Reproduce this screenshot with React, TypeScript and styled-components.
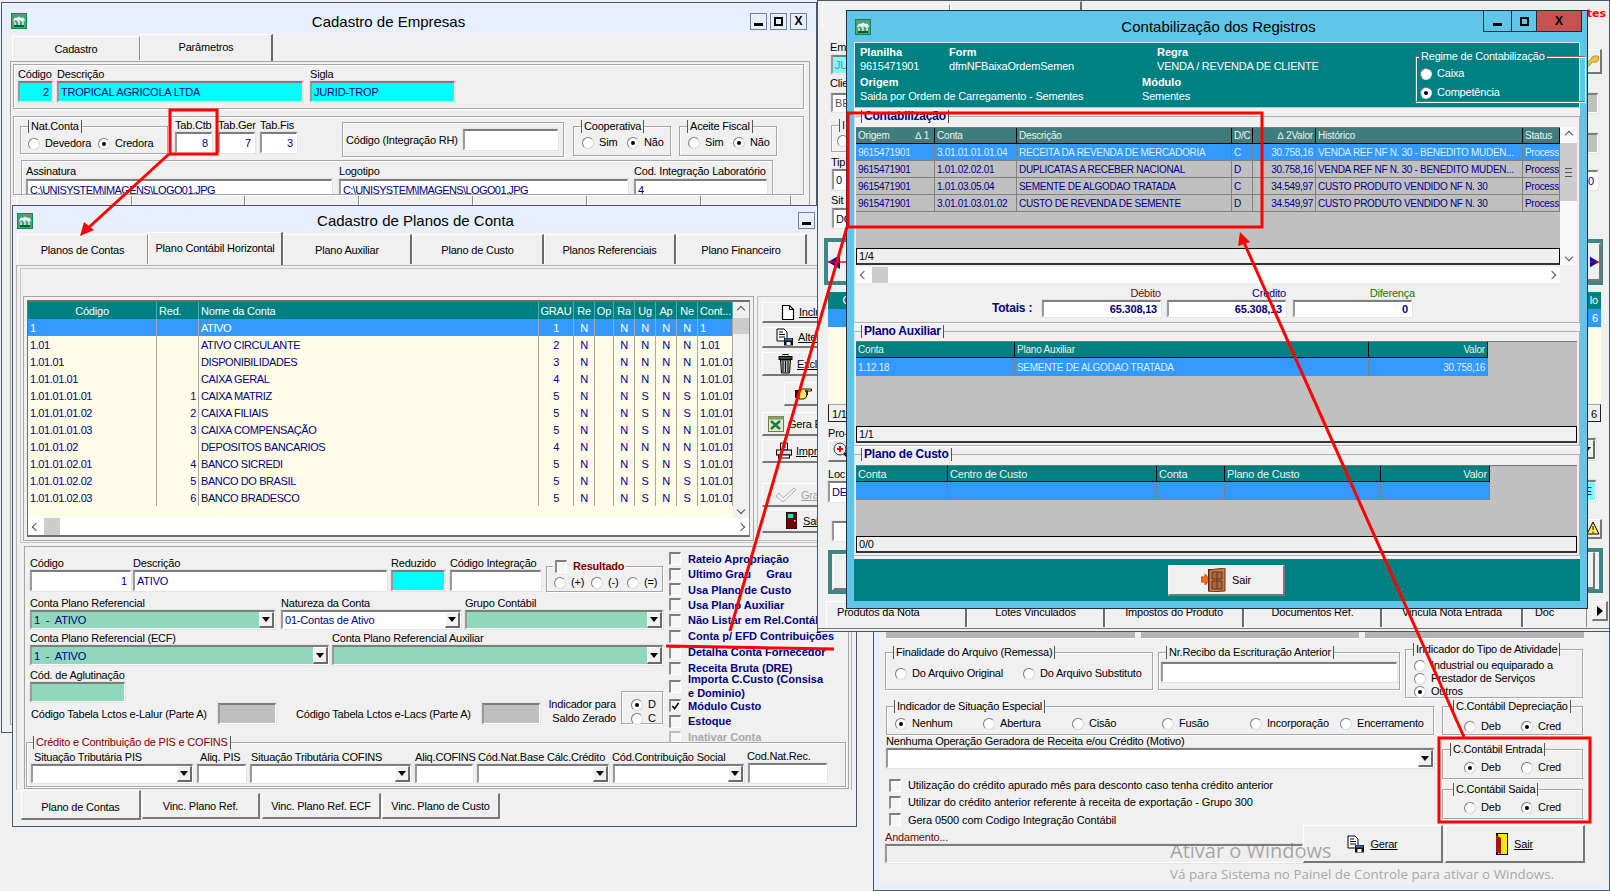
import React from "react";
import styled, { createGlobalStyle, css } from "styled-components";

const FONT = `"Liberation Sans", Arial, sans-serif`;

const Global = createGlobalStyle`
  html, body { margin: 0; padding: 0; background: #f0f0f0; }
  body { font: 11px ${FONT}; color: #000; overflow: hidden; letter-spacing: -0.2px; }
  #root { width: 1610px; height: 891px; }
`;

type Sp = { $mt?: number; $ml?: number };
const space = css<Sp>`
  margin-top: ${(p) => p.$mt ?? 0}px;
  margin-left: ${(p) => p.$ml ?? 0}px;
`;

const Desktop = styled.div`
  position: relative;
  width: 1610px;
  height: 891px;
  overflow: hidden;
  background: #f0f0f0;
`;

const Win = styled.div<{ $x: number; $y: number; $w: number; $h: number; $bg?: string; $edge?: string }>`
  position: absolute;
  left: ${(p) => p.$x}px;
  top: ${(p) => p.$y}px;
  width: ${(p) => p.$w}px;
  height: ${(p) => p.$h}px;
  box-sizing: border-box;
  border: 1px solid ${(p) => p.$edge ?? "#4d5866"};
  background: ${(p) => p.$bg ?? "#f0f0f0"};
  overflow: hidden;
`;

const TitleBar = styled.div<{ $h: number; $pl: number; $pr: number; $bg?: string; $pt?: number }>`
  display: flex;
  align-items: center;
  box-sizing: border-box;
  height: ${(p) => p.$h}px;
  padding: ${(p) => p.$pt ?? 3}px ${(p) => p.$pr}px 0 ${(p) => p.$pl}px;
  background: ${(p) => p.$bg ?? "#e6effb"};
`;

const Title = styled.div<{ $pl?: number; $size?: number }>`
  flex: 1;
  text-align: center;
  font-size: ${(p) => p.$size ?? 15}px;
  padding-left: ${(p) => p.$pl ?? 0}px;
  color: #000;
  white-space: nowrap;
  letter-spacing: 0;
`;

const WinBtns = styled.div`
  display: flex;
  gap: 3px;
`;

const WinBtn = styled.div`
  width: 17px;
  height: 17px;
  box-sizing: border-box;
  border: 1px solid #6f8296;
  background: #e6effb;
  display: flex;
  align-items: center;
  justify-content: center;
  font: bold 12px ${FONT};
`;

const MinGlyph = () => (
  <svg width="11" height="11" viewBox="0 0 11 11">
    <rect x="1" y="7" width="9" height="3" fill="#000" />
  </svg>
);
const MaxGlyph = () => (
  <svg width="11" height="11" viewBox="0 0 11 11">
    <rect x="2" y="2" width="7" height="7" fill="none" stroke="#000" strokeWidth="2" />
  </svg>
);

const TabRow = styled.div<{ $h: number; $pl: number; $gap?: number; $align?: string }>`
  display: flex;
  align-items: ${(p) => p.$align ?? "flex-end"};
  height: ${(p) => p.$h}px;
  padding-left: ${(p) => p.$pl}px;
  gap: ${(p) => p.$gap ?? 0}px;
  box-sizing: border-box;
  flex: none;
`;

const Tab = styled.div<{ $w: number; $h: number; $active?: boolean; $mb?: number; $pt?: number; $pb?: number }>`
  width: ${(p) => p.$w}px;
  height: ${(p) => p.$h}px;
  margin-bottom: ${(p) => p.$mb ?? 0}px;
  box-sizing: border-box;
  flex: none;
  padding-top: ${(p) => p.$pt ?? 0}px;
  padding-bottom: ${(p) => p.$pb ?? 0}px;
  display: flex;
  align-items: center;
  justify-content: center;
  background: #f0f0f0;
  border-top: 1px solid #fff;
  border-left: 1px solid #fff;
  border-right: ${(p) => (p.$active ? "2px solid #6b6b6b" : "1px solid #8c8c8c")};
  font-size: 11px;
  white-space: nowrap;
  overflow: hidden;
`;

const BottomTab = styled(Tab)<Sp & { $low?: boolean }>`
  ${space}
  border-bottom: 2px solid #7a7a7a;
  border-top: ${(p) => (p.$low ? "1px solid #f0f0f0" : "1px solid #fff")};
  border-right: 2px solid #7a7a7a;
  align-self: flex-start;
`;

const Etched = styled.div<Sp & { $w?: number; $h?: number; $pt?: number; $pl?: number; $noRight?: boolean; $line?: string }>`
  ${space}
  position: relative;
  box-sizing: border-box;
  flex: none;
  width: ${(p) => (p.$w ? `${p.$w}px` : "auto")};
  height: ${(p) => (p.$h ? `${p.$h}px` : "auto")};
  padding-top: ${(p) => p.$pt ?? 0}px;
  padding-left: ${(p) => p.$pl ?? 0}px;
  border: 1px solid ${(p) => p.$line ?? "#a6a6a6"};
  ${(p) => p.$noRight && "border-right: none;"}
  box-shadow: inset 1px 1px 0 #fff, 1px 1px 0 #fff;
`;

const Legend = styled.span<{ $color?: string; $bold?: boolean; $size?: number; $bg?: string; $plain?: boolean; $left?: number }>`
  position: absolute;
  top: -7px;
  left: ${(p) => p.$left ?? 7}px;
  display: flex;
  align-items: center;
  gap: 6px;
  line-height: 13px;
  padding: 0 2px;
  background: ${(p) => p.$bg ?? "#f0f0f0"};
  color: ${(p) => p.$color ?? "#000"};
  font-weight: ${(p) => (p.$bold ? 700 : 400)};
  font-size: ${(p) => p.$size ?? 11}px;
  white-space: nowrap;
  ${(p) =>
    !p.$plain &&
    css`
      border-left: 1px solid #555;
      border-right: 1px solid #555;
    `}
`;

const Label = styled.span<{ $ml?: number; $mt?: number; $color?: string }>`
  display: block;
  line-height: 13px;
  height: 13px;
  white-space: nowrap;
  margin-left: ${(p) => p.$ml ?? 0}px;
  margin-top: ${(p) => p.$mt ?? 0}px;
  color: ${(p) => p.$color ?? "#000"};
`;

const Field = styled.div<Sp & { $w: number }>`
  ${space}
  width: ${(p) => p.$w}px;
  flex: none;
`;

const Sunken = styled.div<Sp & { $w?: number; $h?: number; $bg?: string; $right?: boolean; $color?: string; $tight?: boolean }>`
  ${space}
  box-sizing: border-box;
  width: ${(p) => (p.$w ? `${p.$w}px` : "100%")};
  height: ${(p) => p.$h ?? 21}px;
  background: ${(p) => p.$bg ?? "#fff"};
  border-top: 2px solid #7d7d7d;
  border-left: 2px solid #9a9a9a;
  border-right: 1px solid #fff;
  border-bottom: 1px solid #fff;
  outline: 1px solid #e4e4e4;
  outline-offset: 0;
  color: ${(p) => p.$color ?? "#000080"};
  display: flex;
  align-items: center;
  justify-content: ${(p) => (p.$right ? "flex-end" : "space-between")};
  padding-left: 2px;
  padding-right: ${(p) => (p.$right ? 3 : 0)}px;
  white-space: nowrap;
  overflow: hidden;
  flex: none;
  ${(p) => p.$tight && "letter-spacing: -0.6px;"}
`;

const DropBtn = styled.span`
  width: 15px;
  height: 100%;
  flex: none;
  box-sizing: border-box;
  background: #f0f0f0;
  border-top: 1px solid #fff;
  border-left: 1px solid #fff;
  border-right: 2px solid #6a6a6a;
  border-bottom: 2px solid #6a6a6a;
  display: flex;
  align-items: center;
  justify-content: center;
  &::after {
    content: "";
    border-left: 4px solid transparent;
    border-right: 4px solid transparent;
    border-top: 5px solid #000;
  }
`;

const Row = styled.div<Sp & { $gap?: number; $h?: number; $center?: boolean }>`
  ${space}
  display: flex;
  align-items: ${(p) => (p.$center ? "center" : "flex-start")};
  gap: ${(p) => p.$gap ?? 0}px;
  ${(p) => p.$h && `height: ${p.$h}px;`}
  flex: none;
`;

const RadioDot = styled.span<{ $on?: boolean }>`
  width: 12px;
  height: 12px;
  flex: none;
  box-sizing: border-box;
  border-radius: 50%;
  background: #fff;
  border: 1px solid #7c7c7c;
  border-right-color: #d8d8d8;
  border-bottom-color: #d8d8d8;
  display: inline-flex;
  align-items: center;
  justify-content: center;
  &::after {
    content: "";
    width: 4px;
    height: 4px;
    border-radius: 50%;
    background: #000;
    display: ${(p) => (p.$on ? "block" : "none")};
  }
`;

const RadioOpt = styled.label<{ $w?: number; $color?: string; $gap?: number }>`
  display: flex;
  align-items: center;
  gap: ${(p) => p.$gap ?? 5}px;
  width: ${(p) => (p.$w ? `${p.$w}px` : "auto")};
  line-height: 13px;
  white-space: nowrap;
  flex: none;
  color: ${(p) => p.$color ?? "#000"};
`;

const RadioLine = styled.div<{ $l: number; $t: number; $col?: boolean; $gap?: number }>`
  display: flex;
  flex-direction: ${(p) => (p.$col ? "column" : "row")};
  gap: ${(p) => p.$gap ?? 0}px;
  padding: ${(p) => p.$t}px 0 0 ${(p) => p.$l}px;
`;

const Radio = ({ on, w, children, color, gap }: { on?: boolean; w?: number; children: React.ReactNode; color?: string; gap?: number }) => (
  <RadioOpt $w={w} $color={color} $gap={gap}>
    <RadioDot $on={on} />
    <span>{children}</span>
  </RadioOpt>
);

const CheckBox = styled.span<{ $dim?: boolean }>`
  width: 12px;
  height: 13px;
  flex: none;
  box-sizing: border-box;
  background: #f5f5f5;
  border-top: 2px solid ${(p) => (p.$dim ? "#bdbdbd" : "#7d7d7d")};
  border-left: 2px solid ${(p) => (p.$dim ? "#bdbdbd" : "#8d8d8d")};
  border-right: 1px solid #fff;
  border-bottom: 1px solid #fff;
  display: inline-flex;
  align-items: center;
  justify-content: center;
  overflow: hidden;
`;

const CheckRow = styled.div<{ $h: number; $dim?: boolean; $bold?: boolean; $color?: string }>`
  display: flex;
  align-items: center;
  gap: 7px;
  height: ${(p) => p.$h}px;
  color: ${(p) => (p.$dim ? "#a8a8a8" : p.$color ?? "#000080")};
  font-weight: ${(p) => (p.$bold ? 700 : 400)};
  line-height: 14px;
  white-space: nowrap;
  letter-spacing: ${(p) => (p.$bold ? 0 : -0.1)}px;
`;

const Tick = () => (
  <svg width="10" height="10" viewBox="0 0 10 10">
    <path d="M1.5 5 L4 8 L8.5 1.5" fill="none" stroke="#000" strokeWidth="1.8" />
  </svg>
);

/* ---------- buttons ---------- */
const RaisedBtn = styled.div<Sp & { $w: number; $h: number; $dim?: boolean; $gap?: number; $center?: boolean; $pl?: number; $bg?: string; $mr?: number }>`
  ${space}
  margin-right: ${(p) => p.$mr ?? 0}px;
  width: ${(p) => p.$w}px;
  height: ${(p) => p.$h}px;
  box-sizing: border-box;
  flex: none;
  display: flex;
  align-items: center;
  justify-content: ${(p) => (p.$center ? "center" : "flex-start")};
  gap: ${(p) => p.$gap ?? 4}px;
  padding-left: ${(p) => p.$pl ?? 0}px;
  background: ${(p) => p.$bg ?? "#f0f0f0"};
  border-top: 1px solid #fff;
  border-left: 1px solid #fff;
  border-right: 2px solid #777;
  border-bottom: 2px solid #777;
  color: ${(p) => (p.$dim ? "#a0a0a0" : "#000")};
  white-space: nowrap;
  font-size: 11px;
  overflow: hidden;
`;

const U = styled.span`
  text-decoration: underline;
`;

/* ---------- icons ---------- */
const AppIcon = () => (
  <svg width="16" height="16" viewBox="0 0 16 16" style={{ flex: "none" }}>
    <rect width="16" height="16" fill="#0a8a4c" />
    <rect x="1" y="1" width="14" height="14" fill="#4f9f76" />
    <path d="M2 9 Q3 3 6 5 Q8 2 10 5 Q13 3 14 8 L11 9 L9 7 L7 9 L5 7 Z" fill="#e8f5ee" />
    <path d="M4 9 V13 M8 8 V13 M12 9 V13" stroke="#fff" strokeWidth="1.2" />
    <rect x="3" y="12" width="10" height="2" fill="#0b5a30" />
  </svg>
);
const PageIcon = () => (
  <svg width="14" height="17" viewBox="0 0 14 17">
    <path d="M1.5 1.5 H8.5 L12.5 5.5 V15.5 H1.5 Z" fill="#fff" stroke="#000" strokeWidth="1.2" />
    <path d="M8.5 1.5 V5.5 H12.5" fill="none" stroke="#000" />
  </svg>
);
const EditIcon = ({ size = 18 }: { size?: number }) => (
  <svg width={size} height={size} viewBox="0 0 18 18">
    <path d="M1 1 H8 L11 4 V13 H1 Z" fill="#fff" stroke="#000" />
    <path d="M3 4 H7 M3 6.5 H9 M3 9 H9" stroke="#000" />
    <rect x="8" y="10" width="9" height="7.5" fill="#111" />
    <rect x="9" y="10.5" width="7" height="2" fill="#2f6fd0" />
    <rect x="10.5" y="14" width="4" height="3" fill="#fff" />
  </svg>
);
const TrashIcon = () => (
  <svg width="15" height="20" viewBox="0 0 15 20">
    <rect x="5" y="0.5" width="5" height="2" fill="none" stroke="#000" />
    <rect x="1" y="2.5" width="13" height="3" fill="#444" stroke="#000" />
    <path d="M2.5 6 H12.5 L11.5 19 H3.5 Z" fill="#bbb" stroke="#000" />
    <path d="M5 7 V18 M7.5 7 V18 M10 7 V18" stroke="#000" />
  </svg>
);
const HandIcon = () => (
  <svg width="17" height="12" viewBox="0 0 17 12">
    <rect x="0" y="2" width="4" height="8" fill="#111" />
    <path d="M4 2 L7 1 H16.5 V3 H10 H12.5 V5 H11 H12.5 V7 H11 H11.5 V9 L9 11 H4 Z" fill="#ffe85a" stroke="#000" strokeWidth="0.9" />
  </svg>
);
const ExcelIcon = () => (
  <svg width="16" height="16" viewBox="0 0 16 16">
    <rect x="0.5" y="0.5" width="15" height="15" fill="#dfe7d5" stroke="#6f7f40" />
    <rect x="0.5" y="0.5" width="15" height="3" fill="#8a9c66" />
    <path d="M3 5 L12 13 M12 5 L3 13" stroke="#1c7a3a" strokeWidth="2.4" />
  </svg>
);
const PrintIcon = () => (
  <svg width="16" height="17" viewBox="0 0 16 17">
    <path d="M4.5 1 H11.5 V8 H4.5 Z" fill="#fff" stroke="#000" />
    <path d="M6 3 H10 M6 5 H10" stroke="#000" />
    <rect x="0.5" y="8" width="15" height="5" fill="#ddd" stroke="#000" />
    <rect x="2.5" y="13" width="11" height="3" fill="#fff" stroke="#000" />
  </svg>
);
const CheckIcon = () => (
  <svg width="22" height="16" viewBox="0 0 22 16">
    <path d="M1 9 L4 6 L8 11 L19 1 L21 3 L8 15 Z" fill="#f6f6f6" stroke="#b0b0b0" />
  </svg>
);
const RedDoor = () => (
  <svg width="11" height="17" viewBox="0 0 11 17">
    <rect width="11" height="17" fill="#6e0808" stroke="#000" />
    <rect x="2" y="2" width="5" height="4" fill="#22e0e0" />
    <rect x="8" y="8" width="1.5" height="1.5" fill="#ff0" />
  </svg>
);
const WoodDoor = () => (
  <svg width="25" height="24" viewBox="0 0 25 24">
    <path d="M0 9 H4 V6 L9 12 L4 17 V14 H0 Z" fill="#ff6a1a" stroke="#d84000" />
    <rect x="7" y="1" width="6" height="22" fill="#3a1a08" />
    <path d="M8 2 L24 0 V23 L8 24 Z" fill="#c8784a" stroke="#6a3414" />
    <path d="M11 4 H21 V11 H11 Z M11 13 H21 V21 H11 Z M16 4 V21" fill="#a4683e" stroke="#6a3414" />
  </svg>
);
const YellowDoor = () => (
  <svg width="12" height="22" viewBox="0 0 12 22">
    <rect width="12" height="22" fill="#000" />
    <path d="M2 1 H11 V21 H2 Z" fill="#ffe800" />
    <path d="M0 2 L5 5 V21 L0 19 Z" fill="#a01818" />
  </svg>
);
const KeyIcon = () => (
  <svg width="20" height="16" viewBox="0 0 20 16">
    <path d="M1 12 L8 6 Q9 1 14 1 L18 2 Q20 6 16 9 Q12 10 10 9 L5 15 L1 15 Z" fill="#eec24a" stroke="#a67c00" />
  </svg>
);
const WarnIcon = () => (
  <svg width="13" height="15" viewBox="0 0 13 15">
    <path d="M6 1 L12 13 H0 Z" fill="#ffee44" stroke="#000" />
    <path d="M6 5 V9 M6 10.5 V12" stroke="#000" />
  </svg>
);
const LensIcon = () => (
  <svg width="18" height="18" viewBox="0 0 18 18">
    <path d="M10 10 L16 16" stroke="#000" strokeWidth="2.6" />
    <circle cx="7" cy="7" r="6" fill="#eee" stroke="#333" />
    <path d="M7 4 V10 M4 7 H10" stroke="#e01010" strokeWidth="2" />
  </svg>
);
const BlueArrow = () => (
  <svg width="26" height="14" viewBox="0 0 26 14">
    <path d="M0 7 L12 0 V14 Z" fill="#0000c8" />
    <path d="M0 7 H26" stroke="#e00000" strokeWidth="1.4" />
  </svg>
);
const BlueArrowRight = () => (
  <svg width="12" height="14" viewBox="0 0 12 14">
    <path d="M12 7 L0 0 V14 Z" fill="#0000c8" />
    <path d="M0 7 H12" stroke="#e00000" strokeWidth="1.4" />
  </svg>
);

/* ---------- Window 1 ---------- */
const Panel1 = styled.div`
  margin-left: 8px;
  width: 800px;
  height: 664px;
  box-sizing: border-box;
  border: 1px solid #a6a6a6;
  padding: 2px 0 0 2px;
`;
const ClipBox = styled(Etched)`
  overflow: hidden;
`;

/* ---------- Window 2 ---------- */
const PageFrame = styled.div`
  margin-left: 3px;
  width: 836px;
  height: 525px;
  box-sizing: border-box;
  border: 1px solid #b4b4b4;
  border-bottom: none;
  padding: 2px 0 0 3px;
`;
const TopBox = styled.div`
  width: 831px;
  height: 275px;
  box-sizing: border-box;
  border: 1px solid #c4c4c4;
  padding: 27px 0 0 2px;
  display: flex;
  gap: 3px;
`;
const GridGroup = styled.div`
  width: 731px;
  height: 245px;
  box-sizing: border-box;
  border: 1px solid #a6a6a6;
  padding: 3px;
  flex: none;
`;
const GridFrame = styled.div`
  box-sizing: border-box;
  width: 723px;
  height: 237px;
  border-top: 2px solid #6e6e6e;
  border-left: 1px solid #6e6e6e;
  border-right: 1px solid #8e8e8e;
  border-bottom: 2px solid #6e6e6e;
  display: flex;
  flex-direction: column;
  background: #fffde8;
`;
const GridBody = styled.div`
  display: flex;
  height: 216px;
  flex: none;
`;
const GridCol = styled.div`
  flex: none;
  width: 705px;
  overflow: hidden;
`;

const GridLine = styled.div<{ $cols: string; $bg?: string; $color?: string; $h?: number; $sep?: string; $size?: number; $ls?: number; $w?: number; $line?: string }>`
  display: grid;
  grid-template-columns: ${(p) => p.$cols};
  ${(p) => p.$w && `width: ${p.$w}px;`}
  height: ${(p) => p.$h ?? 17}px;
  background: ${(p) => p.$bg ?? "transparent"};
  color: ${(p) => p.$color ?? "#000080"};
  font-size: ${(p) => p.$size ?? 11}px;
  letter-spacing: ${(p) => p.$ls ?? -0.2}px;
  box-sizing: border-box;
  --sep: ${(p) => p.$sep ?? "#a8a8a8"};
  ${(p) => p.$line && `border-bottom: 1px solid ${p.$line};`}
`;
const Cell = styled.div<{ $align?: string; $pad?: number }>`
  display: flex;
  align-items: center;
  justify-content: ${(p) => p.$align ?? "flex-start"};
  padding: 0 ${(p) => p.$pad ?? 2}px;
  border-right: 1px solid var(--sep);
  box-sizing: border-box;
  overflow: hidden;
  white-space: nowrap;
  min-width: 0;
`;

const ScrollV = styled.div<{ $w?: number; $h?: number; $bg?: string }>`
  width: ${(p) => p.$w ?? 16}px;
  ${(p) => p.$h && `height: ${p.$h}px;`}
  flex: none;
  background: ${(p) => p.$bg ?? "#f0f0f0"};
  display: flex;
  flex-direction: column;
  justify-content: space-between;
  align-items: center;
`;
const ThumbV = styled.div<{ $h: number }>`
  width: 100%;
  height: ${(p) => p.$h}px;
  background: #cdcdcd;
  display: flex;
  align-items: center;
  justify-content: center;
  font-size: 8px;
  flex: none;
  box-sizing: border-box;
`;
const Grip = styled.span`
  width: 7px;
  height: 7px;
  border-top: 1px solid #555;
  border-bottom: 1px solid #555;
  position: relative;
  &::after {
    content: "";
    position: absolute;
    left: 0;
    right: 0;
    top: 3px;
    height: 1px;
    background: #555;
  }
`;
const Chevron = styled.span<{ $dir: "up" | "down" | "left" | "right" }>`
  width: 16px;
  height: 16px;
  flex: none;
  display: flex;
  align-items: center;
  justify-content: center;
  &::after {
    content: "";
    width: 5px;
    height: 5px;
    border-top: 1px solid #505050;
    border-left: 1px solid #505050;
    transform: rotate(
      ${(p) => ({ up: 45, right: 135, down: 225, left: 315 }[p.$dir])}deg
    );
  }
`;
const ScrollH = styled.div<Sp & { $w?: number; $h?: number }>`
  ${space}
  ${(p) => p.$w && `width: ${p.$w}px;`}
  height: ${(p) => p.$h ?? 17}px;
  box-sizing: border-box;
  background: #fff;
  display: flex;
  align-items: center;
  flex: none;
`;
const ThumbH = styled.div<{ $w: number }>`
  width: ${(p) => p.$w}px;
  height: 100%;
  background: #cdcdcd;
  flex: none;
`;
const Spacer = styled.div`
  flex: 1;
`;

const BtnCol = styled.div`
  flex: 1;
  height: 245px;
  box-sizing: border-box;
  border: 1px solid #c0c0c0;
  padding-left: 4px;
  overflow: hidden;
`;

const FormPanel = styled.div`
  margin: 3px 0 0 4px;
  width: 825px;
  height: 243px;
  box-sizing: border-box;
  border: 1px solid #a6a6a6;
`;
const FormTop = styled.div`
  display: flex;
  gap: 6px;
  height: 195px;
  padding-left: 5px;
`;
const LeftCol = styled.div`
  width: 633px;
  flex: none;
  padding-top: 10px;
`;
const CheckCol = styled.div`
  padding-top: 4px;
  flex: none;
`;
const LowerBlock = styled(Row)`
  margin-top: 4px;
  align-items: flex-end;
`;
const LowerLeft = styled.div`
  width: 591px;
  flex: none;
`;
const GrayBox = styled(Sunken)<{ $mr?: number }>`
  background: #c0c0c0;
  margin-right: ${(p) => p.$mr ?? 0}px;
`;
const Plain = styled.span<{ $w?: number; $ml?: number }>`
  display: block;
  white-space: nowrap;
  ${(p) => p.$w && `width: ${p.$w}px;`}
  margin-left: ${(p) => p.$ml ?? 0}px;
  flex: none;
`;
const IndLines = styled.div`
  width: 76px;
  flex: none;
  text-align: right;
  line-height: 14px;
  margin-top: -6px;
  white-space: nowrap;
`;

/* ---------- Window 4 strips ---------- */
const Middle = styled.div`
  display: flex;
  justify-content: space-between;
  height: 573px;
  flex: none;
`;
const StripCol = styled.div<{ $right?: boolean }>`
  width: 60px;
  position: relative;
  flex: none;
  display: flex;
  flex-direction: column;
  align-items: ${(p) => (p.$right ? "flex-end" : "flex-start")};
`;
const StripText = styled.span<Sp & { $bold?: boolean; $mr?: number }>`
  ${space}
  line-height: 13px;
  height: 13px;
  display: block;
  flex: none;
`;
const StripInput = styled(Sunken)<{ $mr?: number }>`
  margin-right: ${(p) => p.$mr ?? 0}px;
`;
const TealFrame = styled.div<Sp & { $w: number; $h: number; $mr?: number; $inner?: string }>`
  ${space}
  margin-right: ${(p) => p.$mr ?? 0}px;
  width: ${(p) => p.$w}px;
  height: ${(p) => p.$h}px;
  box-sizing: border-box;
  flex: none;
  border: 4px solid #3f8585;
  background: ${(p) => p.$inner ?? "#f0f0f0"};
  display: flex;
  align-items: center;
`;
const MiniGrid = styled.div<Sp & { $mr?: number; $right?: boolean }>`
  ${space}
  margin-right: ${(p) => p.$mr ?? 0}px;
  width: 50px;
  flex: none;
  display: flex;
  flex-direction: column;
  text-align: ${(p) => (p.$right ? "right" : "left")};
`;
const MiniBand = styled.div<{ $bg: string; $h: number; $color?: string }>`
  height: ${(p) => p.$h}px;
  box-sizing: border-box;
  background: ${(p) => p.$bg};
  color: ${(p) => p.$color ?? "#fff"};
  line-height: ${(p) => p.$h}px;
  padding: 0 3px;
  font-size: 11px;
`;
const MiniBar = styled(MiniBand)<{ $right?: boolean }>`
  border: 1px solid #222;
  border-top: 1px solid #aaa;
  background: #f0f0f0;
  color: #000;
  margin-top: 1px;
`;
const RedTes = styled.div`
  position: absolute;
  right: 3px;
  top: -22px;
  color: #ff0000;
  font: bold 11px "DejaVu Sans", sans-serif;
  letter-spacing: 0;
  line-height: 16px;
`;
const ArrowBtn = styled(RaisedBtn)`
  &::after {
    content: "";
    border-top: 5px solid transparent;
    border-bottom: 5px solid transparent;
    border-left: 6px solid #000;
    margin: 0 auto;
  }
`;
const Win4Bottom = styled.div`
  height: 4px;
  border-top: 1px solid #777;
  border-bottom: 1px solid #aaa;
`;

/* ---------- Window 3 ---------- */
const Win3Btns = styled.div`
  display: flex;
  align-self: flex-start;
`;
const Win3Btn = styled.div<{ $w: number; $bg?: string }>`
  width: ${(p) => p.$w}px;
  height: 21px;
  box-sizing: border-box;
  border: 1px solid #1e2a33;
  border-top: none;
  margin-left: -1px;
  background: ${(p) => p.$bg ?? "#5fc6ea"};
  display: flex;
  align-items: center;
  justify-content: center;
  font: bold 12px ${FONT};
`;
const Win3Body = styled.div`
  margin-left: 7px;
  width: 726px;
  height: 559px;
  background: #f0f0f0;
  display: flex;
  flex-direction: column;
`;
const TealHeader = styled.div`
  height: 66px;
  flex: none;
  background: #008080;
  color: #fff;
  display: flex;
  border: 1px solid #d8eaea;
  box-sizing: border-box;
  border-bottom-color: #9fcfcf;
`;
const HeadLeft = styled.div`
  width: 555px;
  flex: none;
  padding: 2px 0 0 5px;
  display: flex;
  flex-direction: column;
  gap: 2px;
`;
const HeadRow = styled.div`
  display: flex;
`;
const HeadCell = styled.div<{ $w: number }>`
  width: ${(p) => p.$w}px;
  flex: none;
  line-height: 14px;
  white-space: nowrap;
`;
const B = styled.div`
  font-weight: 700;
  letter-spacing: 0;
`;
const Section = styled.div<Sp & { $h: number }>`
  ${space}
  position: relative;
  flex: none;
  height: ${(p) => p.$h}px;
  box-sizing: border-box;
  border: 1px solid #b0b0b0;
  border-left-color: #d8d8d8;
  padding-left: 1px;
  box-shadow: 0 1px 0 #fff;
`;
const DataArea = styled.div<{ $h: number; $w: number }>`
  height: ${(p) => p.$h}px;
  width: ${(p) => p.$w}px;
  background: #c0c0c0;
  border-top: 1px solid #777;
  box-sizing: border-box;
  overflow: hidden;
`;
const GridHead = styled(GridLine)`
  border-bottom: 1px solid #000;
  color: #e8f4f4;
  --sep: #000;
`;
const StatusBar = styled.div<{ $w: number }>`
  width: ${(p) => p.$w}px;
  height: 17px;
  box-sizing: border-box;
  border: 1px solid #000;
  border-bottom: 2px solid #333;
  background: #f0f0f0;
  line-height: 15px;
  padding-left: 2px;
  flex: none;
`;
const Totals = styled.div`
  display: flex;
  align-items: flex-end;
  margin-top: 3px;
  padding-left: 136px;
`;
const TotalLabel = styled.div`
  width: 50px;
  flex: none;
  font: 700 12px ${FONT};
  color: #000080;
  line-height: 18px;
`;
const TotalField = styled.div<{ $w: number; $ml: number }>`
  width: ${(p) => p.$w}px;
  margin-left: ${(p) => p.$ml}px;
  flex: none;
  text-align: right;
`;
const TotalTitle = styled.div<{ $color: string; $mr?: number }>`
  color: ${(p) => p.$color};
  line-height: 14px;
  margin-right: ${(p) => p.$mr ?? 0}px;
  white-space: nowrap;
`;
const TotalVal = styled(Sunken)`
  font-weight: 700;
`;
const FootBar = styled.div`
  margin-top: 3px;
  flex: none;
  height: 42px;
  background: #008080;
  display: flex;
  align-items: center;
  justify-content: center;
  padding-left: 19px;
`;
const Regime = styled(Etched)`
  margin-left: auto;
`;

/* ---------- Window 5 ---------- */
const Win5Inner = styled.div`
  margin-left: 6px;
  width: 725px;
  height: 252px;
  background: #f0f0f0;
  padding-left: 5px;
  box-sizing: border-box;
`;
const TopBars = styled.div`
  display: flex;
  gap: 6px;
  padding-left: 1px;
`;
const TopBar = styled.div<{ $w: number }>`
  width: ${(p) => p.$w}px;
  height: 6px;
  background: #b4b4b4;
  border-bottom: 1px solid #fff;
  flex: none;
`;
const Col = styled.div<Sp & { $w: number }>`
  ${space}
  width: ${(p) => p.$w}px;
  flex: none;
`;

/* ---------- overlays ---------- */
const Annot = styled.svg`
  position: absolute;
  left: 0;
  top: 0;
  pointer-events: none;
`;
const Watermark = styled.div`
  position: absolute;
  left: 1170px;
  top: 839px;
  color: rgba(115, 115, 115, 0.6);
  font-family: "Open Sans", sans-serif;
  pointer-events: none;
  white-space: nowrap;
  letter-spacing: 0;
`;
const WmA = styled.div`
  font-size: 20px;
  line-height: 24px;
`;
const WmB = styled.div`
  font-size: 13.4px;
  line-height: 20px;
  margin-top: 1px;
`;

/* ---------- data ---------- */
const planCols = "129px 42px 340px 35px 21px 19px 21px 21px 21px 21px 35px";
const planHead = ["Código", "Red.", "Nome da Conta", "GRAU", "Re", "Op", "Ra", "Ug", "Ap", "Ne", "Cont..."];
const planRows = [
  ["1", "", "ATIVO", "1", "N", "", "N", "N", "N", "N", "1"],
  ["1.01", "", "ATIVO CIRCULANTE", "2", "N", "", "N", "N", "N", "N", "1.01"],
  ["1.01.01", "", "DISPONIBILIDADES", "3", "N", "", "N", "N", "N", "N", "1.01.01"],
  ["1.01.01.01", "", "CAIXA GERAL", "4", "N", "", "N", "N", "N", "N", "1.01.01"],
  ["1.01.01.01.01", "1", "CAIXA MATRIZ", "5", "N", "", "N", "S", "N", "S", "1.01.01"],
  ["1.01.01.01.02", "2", "CAIXA FILIAIS", "5", "N", "", "N", "S", "N", "S", "1.01.01"],
  ["1.01.01.01.03", "3", "CAIXA COMPENSAÇÃO", "5", "N", "", "N", "S", "N", "N", "1.01.01"],
  ["1.01.01.02", "", "DEPOSITOS BANCARIOS", "4", "N", "", "N", "N", "N", "N", "1.01.01"],
  ["1.01.01.02.01", "4", "BANCO SICREDI", "5", "N", "", "N", "S", "N", "S", "1.01.01"],
  ["1.01.01.02.02", "5", "BANCO DO BRASIL", "5", "N", "", "N", "S", "N", "S", "1.01.01"],
  ["1.01.01.02.03", "6", "BANCO BRADESCO", "5", "N", "", "N", "S", "N", "S", "1.01.01"],
];
const planAlign = (i: number) => (i === 1 ? "flex-end" : i >= 3 && i <= 9 ? "center" : "flex-start");

const contCols = "79px 82px 215px 21px 63px 207px 37px";
const contHead = ["Origem\u00a0\u00a0\u00a0\u00a0\u00a0\u00a0\u00a0\u00a0\u00a0\u00a0∆ 1", "Conta", "Descrição", "D/C", "∆ 2Valor", "Histórico", "Status"];
const contRows = [
  ["9615471901", "3.01.01.01.01.04", "RECEITA DA REVENDA DE MERCADORIA", "C", "30.758,16", "VENDA REF NF N. 30 - BENEDITO MUDEN...", "Processado"],
  ["9615471901", "1.01.02.02.01", "DUPLICATAS A RECEBER NACIONAL", "D", "30.758,16", "VENDA REF NF N. 30 - BENEDITO MUDEN...", "Processado"],
  ["9615471901", "1.01.03.05.04", "SEMENTE DE ALGODAO TRATADA", "C", "34.549,97", "CUSTO PRODUTO VENDIDO NF N. 30", "Processado"],
  ["9615471901", "3.01.01.03.01.02", "CUSTO DE REVENDA DE SEMENTE", "D", "34.549,97", "CUSTO PRODUTO VENDIDO NF N. 30", "Processado"],
];
const checkItems: { t: React.ReactNode; h: number; on?: boolean; dim?: boolean }[] = [
  { t: "Rateio Apropriação", h: 15 },
  { t: "Ultimo Grau\u00a0\u00a0\u00a0\u00a0\u00a0Grau", h: 16 },
  { t: "Usa Plano de Custo", h: 15 },
  { t: "Usa Plano Auxiliar", h: 15 },
  { t: "Não Listar em Rel.Contábil", h: 16 },
  { t: "Conta p/ EFD Contribuições", h: 16 },
  { t: "Detalha Conta Fornecedor", h: 16 },
  { t: "Receita Bruta (DRE)", h: 16 },
  { t: <span>Importa C.Custo (Consisa<br />e Dominio)</span>, h: 20 },
  { t: "Módulo Custo", h: 19, on: true },
  { t: "Estoque", h: 12 },
  { t: "Inativar Conta", h: 20, dim: true },
];

export default function App() {
  return (
    <Desktop>
      <Global />

      {/* Cadastro de Empresas */}
      <Win $x={1} $y={2} $w={816} $h={731}>
        <TitleBar $h={30} $pl={9} $pr={9} $pt={6}>
          <AppIcon />
          <Title>Cadastro de Empresas</Title>
          <WinBtns>
            <WinBtn><MinGlyph /></WinBtn>
            <WinBtn><MaxGlyph /></WinBtn>
            <WinBtn>X</WinBtn>
          </WinBtns>
        </TitleBar>
        <TabRow $h={28} $pl={10}>
          <Tab $w={128} $h={24} $mb={1}>Cadastro</Tab>
          <Tab $w={133} $h={27} $active $pb={3}>Parâmetros</Tab>
        </TabRow>
        <Panel1>
          <Etched $w={791} $h={45} $pt={3} $pl={4}>
            <Row $gap={4}>
              <Field $w={35}>
                <Label>Código</Label>
                <Sunken $bg="#00ffff" $right>2</Sunken>
              </Field>
              <Field $w={246}>
                <Label>Descrição</Label>
                <Sunken $bg="#00ffff">TROPICAL AGRICOLA LTDA</Sunken>
              </Field>
              <Field $w={145} $ml={3}>
                <Label>Sigla</Label>
                <Sunken $bg="#00ffff">JURID-TROP</Sunken>
              </Field>
            </Row>
          </Etched>
          <ClipBox $w={791} $h={79} $mt={7} $pt={2} $pl={6}>
            <Row $h={41}>
              <Etched $w={148} $h={28} $mt={7}>
                <Legend>Nat.Conta</Legend>
                <RadioLine $l={7} $t={10}>
                  <Radio w={70}>Devedora</Radio>
                  <Radio on>Credora</Radio>
                </RadioLine>
              </Etched>
              <Field $w={37} $ml={7}>
                <Label>Tab.Ctb</Label>
                <Sunken $right>8</Sunken>
              </Field>
              <Field $w={37} $ml={6}>
                <Label>Tab.Ger</Label>
                <Sunken $right>7</Sunken>
              </Field>
              <Field $w={37} $ml={5}>
                <Label>Tab.Fis</Label>
                <Sunken $right>3</Sunken>
              </Field>
              <Etched $w={222} $h={35} $mt={3} $ml={45}>
                <Row $center $h={33} $gap={5} $ml={3}>
                  <Plain>Código (Integração RH)</Plain>
                  <Sunken $w={95}> </Sunken>
                </Row>
              </Etched>
              <Etched $w={98} $h={30} $mt={7} $ml={9}>
                <Legend>Cooperativa</Legend>
                <RadioLine $l={8} $t={9}>
                  <Radio w={45}>Sim</Radio>
                  <Radio on>Não</Radio>
                </RadioLine>
              </Etched>
              <Etched $w={98} $h={30} $mt={7} $ml={8}>
                <Legend>Aceite Fiscal</Legend>
                <RadioLine $l={8} $t={9}>
                  <Radio w={45}>Sim</Radio>
                  <Radio on>Não</Radio>
                </RadioLine>
              </Etched>
            </Row>
            <Etched $w={752} $h={50} $ml={1} $pt={4} $pl={4}>
              <Row $gap={7}>
                <Field $w={306}>
                  <Label>Assinatura</Label>
                  <Sunken $h={21} $mt={1} $tight>C:\UNISYSTEM\IMAGENS\LOGO01.JPG</Sunken>
                </Field>
                <Field $w={289}>
                  <Label>Logotipo</Label>
                  <Sunken $h={21} $mt={1} $tight>C:\UNISYSTEM\IMAGENS\LOGO01.JPG</Sunken>
                </Field>
                <Field $w={133} $ml={-1}>
                  <Label>Cod. Integração Laboratório</Label>
                  <Sunken $h={21} $mt={1}>4</Sunken>
                </Field>
              </Row>
            </Etched>
          </ClipBox>
          <TabRow $h={10} $pl={3} $align="flex-start">
            {[116, 113, 114, 114, 114, 114, 90].map((w, i) => (
              <Tab key={i} $w={w} $h={30} />
            ))}
          </TabRow>
        </Panel1>
      </Win>

      {/* Cadastro de Planos de Conta */}
      <Win $x={12} $y={205} $w={845} $h={622}>
        <TitleBar $h={26} $pl={4} $pr={41}>
          <AppIcon />
          <Title>Cadastro de Planos de Conta</Title>
          <WinBtn><MinGlyph /></WinBtn>
        </TitleBar>
        <TabRow $h={33} $pl={4}>
          <Tab $w={131} $h={30} $mb={1}>Planos de Contas</Tab>
          <Tab $w={135} $h={33} $active $pb={3}>Plano Contábil Horizontal</Tab>
          <Tab $w={129} $h={30} $mb={1} $active>Plano Auxiliar</Tab>
          <Tab $w={132} $h={30} $mb={1} $active>Plano de Custo</Tab>
          <Tab $w={132} $h={30} $mb={1} $active>Planos Referenciais</Tab>
          <Tab $w={131} $h={30} $mb={1} $active>Plano Financeiro</Tab>
        </TabRow>
        <PageFrame>
          <TopBox>
            <GridGroup>
              <GridFrame>
                <GridBody>
                  <GridCol>
                    <GridLine $cols={planCols} $bg="#008080" $color="#fff" $sep="#4db0b0">
                      {planHead.map((h, i) => (
                        <Cell key={h} $align={i === 0 || (i >= 3 && i < 10) ? "center" : "flex-start"}>{h}</Cell>
                      ))}
                    </GridLine>
                    {planRows.map((r, ri) => (
                      <GridLine
                        key={ri}
                        $cols={planCols}
                        $bg={ri === 0 ? "#3399ff" : "transparent"}
                        $color={ri === 0 ? "#fff" : "#000080"}
                        $ls={-0.4}
                      >
                        {r.map((c, i) => (
                          <Cell key={i} $align={planAlign(i)}>{c}</Cell>
                        ))}
                      </GridLine>
                    ))}
                  </GridCol>
                  <ScrollV>
                    <Chevron $dir="up" />
                    <ThumbV $h={16} />
                    <Spacer />
                    <Chevron $dir="down" />
                  </ScrollV>
                </GridBody>
                <ScrollH>
                  <Chevron $dir="left" />
                  <ThumbH $w={16} />
                  <Spacer />
                  <Chevron $dir="right" />
                </ScrollH>
              </GridFrame>
            </GridGroup>
            <BtnCol>
              <RaisedBtn $w={90} $h={21} $mt={5} $pl={18}><PageIcon /><U>Incluir</U></RaisedBtn>
              <RaisedBtn $w={90} $h={21} $mt={4} $pl={13}><EditIcon /><U>Alterar</U></RaisedBtn>
              <RaisedBtn $w={90} $h={24} $mt={4} $pl={15}><TrashIcon /><U>Excluir</U></RaisedBtn>
              <RaisedBtn $w={70} $h={24} $mt={6} $ml={22} $pl={10}><HandIcon /></RaisedBtn>
              <RaisedBtn $w={90} $h={24} $mt={6} $pl={5}><ExcelIcon /><span>Gera Excel</span></RaisedBtn>
              <RaisedBtn $w={90} $h={24} $mt={3} $pl={13}><PrintIcon /><U>Imprimir</U></RaisedBtn>
              <RaisedBtn $w={90} $h={24} $mt={20} $pl={12} $dim><CheckIcon /><U>Gravar</U></RaisedBtn>
              <RaisedBtn $w={90} $h={24} $mt={2} $pl={23} $gap={6}><RedDoor /><U>Sair</U></RaisedBtn>
            </BtnCol>
          </TopBox>
          <FormPanel>
            <FormTop>
              <LeftCol>
                <Row $h={35}>
                  <Field $w={101}>
                    <Label>Código</Label>
                    <Sunken $right>1</Sunken>
                  </Field>
                  <Field $w={254} $ml={2}>
                    <Label>Descrição</Label>
                    <Sunken>ATIVO</Sunken>
                  </Field>
                  <Field $w={54} $ml={4}>
                    <Label>Reduzido</Label>
                    <Sunken $bg="#00ffff"> </Sunken>
                  </Field>
                  <Field $w={91} $ml={5}>
                    <Label>Código Integração</Label>
                    <Sunken> </Sunken>
                  </Field>
                  <Etched $w={117} $h={26} $mt={9} $ml={5}>
                    <Legend $plain $color="#800000" $bold $left={6}>
                      <CheckBox />
                      Resultado
                    </Legend>
                    <RadioLine $l={7} $t={9}>
                      <Radio w={37} gap={5}>(+)</Radio>
                      <Radio w={36} gap={5}>(-)</Radio>
                      <Radio gap={5}>(=)</Radio>
                    </RadioLine>
                  </Etched>
                </Row>
                <Row $mt={5} $gap={6}>
                  <Field $w={245}>
                    <Label>Conta Plano Referencial</Label>
                    <Sunken $h={19} $bg="#8fd8bc">1&nbsp;&nbsp;-&nbsp;&nbsp;ATIVO<DropBtn /></Sunken>
                  </Field>
                  <Field $w={180}>
                    <Label>Natureza da Conta</Label>
                    <Sunken $h={19}>01-Contas de Ativo<DropBtn /></Sunken>
                  </Field>
                  <Field $w={198} $ml={-2}>
                    <Label>Grupo Contábil</Label>
                    <Sunken $h={19} $bg="#8fd8bc"><span /><DropBtn /></Sunken>
                  </Field>
                </Row>
                <Row $mt={3} $gap={3}>
                  <Field $w={299}>
                    <Label>Conta Plano Referencial (ECF)</Label>
                    <Sunken $h={20} $bg="#8fd8bc">1&nbsp;&nbsp;-&nbsp;&nbsp;ATIVO<DropBtn /></Sunken>
                  </Field>
                  <Field $w={331}>
                    <Label>Conta Plano Referencial Auxiliar</Label>
                    <Sunken $h={20} $bg="#8fd8bc"><span /><DropBtn /></Sunken>
                  </Field>
                </Row>
                <LowerBlock>
                  <LowerLeft>
                    <Field $w={95}>
                      <Label>Cód. de Aglutinação</Label>
                      <Sunken $h={20} $bg="#8fd8bc"> </Sunken>
                    </Field>
                    <Row $center $h={21} $mt={1}>
                      <Plain $w={187} $ml={1}>Código Tabela Lctos e-Lalur (Parte A)</Plain>
                      <GrayBox $w={58}> </GrayBox>
                      <Plain $w={186} $ml={20}>Código Tabela Lctos e-Lacs (Parte A)</Plain>
                      <GrayBox $w={58}> </GrayBox>
                      <IndLines>Indicador para<br />Saldo Zerado</IndLines>
                    </Row>
                  </LowerLeft>
                  <Etched $w={42} $h={33}>
                    <RadioLine $l={9} $t={6} $col $gap={1}>
                      <Radio on gap={5}>D</Radio>
                      <Radio gap={5}>C</Radio>
                    </RadioLine>
                  </Etched>
                </LowerBlock>
              </LeftCol>
              <CheckCol>
                {checkItems.map((c, i) => (
                  <CheckRow key={i} $h={c.h} $dim={c.dim} $bold>
                    <CheckBox $dim={c.dim}>{c.on && <Tick />}</CheckBox>
                    <span>{c.t}</span>
                  </CheckRow>
                ))}
              </CheckCol>
            </FormTop>
            <Etched $w={820} $h={45} $ml={1} $pt={8} $pl={4}>
              <Legend $color="#800000" $left={6}>Crédito e Contribuição de PIS e COFINS</Legend>
              <Row $gap={4}>
                <Field $w={162}><Label $ml={3}>Situação Tributária PIS</Label><Sunken $h={19}><span /><DropBtn /></Sunken></Field>
                <Field $w={49}><Label $ml={3}>Aliq. PIS</Label><Sunken $h={19}> </Sunken></Field>
                <Field $w={161}><Label $ml={1}>Situação Tributária COFINS</Label><Sunken $h={19}><span /><DropBtn /></Sunken></Field>
                <Field $w={58}><Label>Aliq.COFINS</Label><Sunken $h={19}> </Sunken></Field>
                <Field $w={132}><Label $ml={1}>Cód.Nat.Base Cálc.Crédito</Label><Sunken $h={19}><span /><DropBtn /></Sunken></Field>
                <Field $w={131}><Label $ml={-1}>Cód.Contribuição Social</Label><Sunken $h={19}><span /><DropBtn /></Sunken></Field>
                <Field $w={79} $mt={-1}><Label $ml={-1}>Cod.Nat.Rec.</Label><Sunken $h={20}> </Sunken></Field>
              </Row>
            </Etched>
          </FormPanel>
        </PageFrame>
        <TabRow $h={31} $pl={8} $align="flex-start">
          <BottomTab $w={120} $h={30} $pt={4}>Plano de Contas</BottomTab>
          <BottomTab $w={118} $h={26} $low $mt={3} $ml={1}>Vinc. Plano Ref.</BottomTab>
          <BottomTab $w={119} $h={26} $low $mt={3} $ml={2}>Vinc. Plano Ref. ECF</BottomTab>
          <BottomTab $w={118} $h={26} $low $mt={3} $ml={1}>Vinc. Plano de Custo</BottomTab>
        </TabRow>
      </Win>

      {/* Window behind the Contabilização dialog */}
      <Win $x={817} $y={0} $w={793} $h={632}>
        <TabRow $h={27} $pl={4} $align="flex-end">
          <Tab $w={128} $h={24} />
          <Tab $w={132} $h={27} $active>Movimentação</Tab>
        </TabRow>
        <Middle>
          <StripCol>
            <StripText $mt={13} $ml={12}>Em</StripText>
            <StripInput $w={50} $h={19} $mt={1} $ml={13} $bg="#7ffbfb" $color="#6a8a9a">JU</StripInput>
            <StripText $mt={3} $ml={12}>Clie</StripText>
            <StripInput $w={50} $h={19} $mt={3} $ml={13} $color="#555">BE</StripInput>
            <Etched $w={40} $h={27} $mt={13} $ml={13}>
              <Legend $color="#000080">I</Legend>
              <RadioLine $l={5} $t={9}><Radio>{""}</Radio></RadioLine>
            </Etched>
            <StripText $mt={4} $ml={13}>Tip</StripText>
            <StripInput $w={50} $ml={14}>0</StripInput>
            <StripText $mt={4} $ml={13}>Sit</StripText>
            <StripInput $w={50} $h={20} $mt={1} $ml={14}>DO</StripInput>
            <TealFrame $w={60} $h={47} $mt={10} $ml={6}>
              <BlueArrow />
            </TealFrame>
            <MiniGrid $mt={7} $ml={10}>
              <MiniBand $bg="#008080" $h={17}>&nbsp;&nbsp;&nbsp;&nbsp;C</MiniBand>
              <MiniBand $bg="#3399ff" $h={18} />
              <MiniBand $bg="#fffde8" $h={76} />
              <MiniBar $bg="#f0f0f0" $h={18}>1/1</MiniBar>
            </MiniGrid>
            <StripText $mt={5} $ml={10}>Pro-</StripText>
            <RaisedBtn $w={50} $h={22} $ml={10} $pl={4}><LensIcon /></RaisedBtn>
            <StripText $mt={6} $ml={10}>Loc</StripText>
            <StripInput $w={50} $h={21} $ml={10}>DE</StripInput>
            <StripInput $w={50} $h={20} $mt={19} $ml={14}> </StripInput>
            <TealFrame $w={50} $h={44} $mt={9} $ml={10}>
              <RaisedBtn $w={40} $h={36} $ml={1} />
            </TealFrame>
          </StripCol>
          <StripCol $right>
            <RedTes>tes</RedTes>
            <RaisedBtn $w={40} $h={25} $mt={21} $pl={22} $mr={7}><KeyIcon /></RaisedBtn>
            <GrayBox $w={40} $h={20} $mt={19} $mr={11}> </GrayBox>
            <GrayBox $w={40} $h={20} $mt={20} $mr={11}> </GrayBox>
            <StripInput $w={40} $h={20} $mt={17} $mr={11} $right>0</StripInput>
            <TealFrame $w={40} $h={46} $mt={49} $mr={6}>
              <RaisedBtn $w={34} $h={38} $center $pl={22}><BlueArrowRight /></RaisedBtn>
            </TealFrame>
            <MiniGrid $mt={7} $mr={8} $right>
              <MiniBand $bg="#008080" $h={17}>lo</MiniBand>
              <MiniBand $bg="#3399ff" $h={18}>6</MiniBand>
              <MiniBand $bg="#fffde8" $h={76} />
              <MiniBar $bg="#f0f0f0" $h={18}>6</MiniBar>
            </MiniGrid>
            <StripInput $w={40} $h={22} $mt={16} $mr={13}><span /><DropBtn /></StripInput>
            <StripInput $w={40} $h={21} $mt={20} $mr={13} $bg="#7ffbfb" $right>E</StripInput>
            <RaisedBtn $w={40} $h={20} $mt={18} $pl={24} $mr={7}><WarnIcon /></RaisedBtn>
            <TealFrame $w={40} $h={45} $mt={9} $mr={6}>
              <RaisedBtn $w={28} $h={37} />
            </TealFrame>
          </StripCol>
        </Middle>
        <TabRow $h={27} $pl={8} $align="flex-start">
          <Tab $w={141} $h={26} $active $pb={6}>
            <Plain $w={118}>Produtos da Nota</Plain>
          </Tab>
          <Tab $w={138} $h={26} $active $pb={6}>Lotes Vinculados</Tab>
          <Tab $w={139} $h={26} $active $pb={6}>Impostos do Produto</Tab>
          <Tab $w={138} $h={26} $active $pb={6}>Documentos Ref.</Tab>
          <Tab $w={141} $h={26} $active $pb={6}>Vincula Nota Entrada</Tab>
          <Tab $w={64} $h={26} $pb={6}><Plain $w={40}>Doc</Plain></Tab>
          <ArrowBtn $w={16} $h={20} $ml={5} />
        </TabRow>
        <Win4Bottom />
      </Win>

      {/* Lower right form */}
      <Win $x={873} $y={631} $w={737} $h={260} $bg="#e6effb">
        <Win5Inner>
          <TopBars>
            <TopBar $w={249} />
            <TopBar $w={218} />
            <TopBar $w={219} />
          </TopBars>
          <Row $mt={10} $h={49} $gap={5}>
            <Etched $w={268} $h={38} $mt={3}>
              <Legend>Finalidade do Arquivo (Remessa)</Legend>
              <RadioLine $l={9} $t={14}>
                <Radio w={128}>Do Arquivo Original</Radio>
                <Radio>Do Arquivo Substituto</Radio>
              </RadioLine>
            </Etched>
            <Etched $w={242} $h={38} $mt={3} $pt={9} $pl={2}>
              <Legend>Nr.Recibo da Escrituração Anterior</Legend>
              <Sunken $w={236} $h={20}> </Sunken>
            </Etched>
            <Etched $w={178} $h={49}>
              <Legend>Indicador do Tipo de Atividade</Legend>
              <RadioLine $l={8} $t={9} $col $gap={0}>
                <Radio>Industrial ou equiparado a</Radio>
                <Radio>Prestador de Serviços</Radio>
                <Radio on>Outros</Radio>
              </RadioLine>
            </Etched>
          </Row>
          <Row $mt={8} $h={119}>
            <Col $w={548} $ml={1}>
              <Etched $w={548} $h={29}>
                <Legend>Indicador de Situação Especial</Legend>
                <RadioLine $l={8} $t={10}>
                  <Radio on w={88}>Nenhum</Radio>
                  <Radio w={89}>Abertura</Radio>
                  <Radio w={90}>Cisão</Radio>
                  <Radio w={88}>Fusão</Radio>
                  <Radio w={90}>Incorporação</Radio>
                  <Radio>Encerramento</Radio>
                </RadioLine>
              </Etched>
              <Label>Nenhuma Operação Geradora de Receita e/ou Crédito (Motivo)</Label>
              <Sunken $h={20} $w={548}><span /><DropBtn /></Sunken>
              <Col $w={400} $mt={9} $ml={3}>
                <CheckRow $h={16} $color="#000"><CheckBox /><span>Utilização do crédito apurado mês para desconto caso tenha crédito anterior</span></CheckRow>
                <CheckRow $h={18} $color="#000"><CheckBox /><span>Utilizar do crédito anterior referente à receita de exportação - Grupo 300</span></CheckRow>
                <CheckRow $h={17} $color="#000"><CheckBox /><span>Gera 0500 com Codigo Integração Contábil</span></CheckRow>
              </Col>
            </Col>
            <Col $w={141} $ml={8}>
              <Etched $w={141} $h={29}>
                <Legend $left={10}>C.Contábil Depreciação</Legend>
                <RadioLine $l={21} $t={13}>
                  <Radio w={57}>Deb</Radio>
                  <Radio on>Cred</Radio>
                </RadioLine>
              </Etched>
              <Etched $w={141} $h={30} $mt={14}>
                <Legend $left={7}>C.Contábil Entrada</Legend>
                <RadioLine $l={21} $t={11}>
                  <Radio on w={57}>Deb</Radio>
                  <Radio>Cred</Radio>
                </RadioLine>
              </Etched>
              <Etched $w={141} $h={30} $mt={10}>
                <Legend $left={10}>C.Contábil Saida</Legend>
                <RadioLine $l={21} $t={11}>
                  <Radio w={57}>Deb</Radio>
                  <Radio on>Cred</Radio>
                </RadioLine>
              </Etched>
            </Col>
          </Row>
          <Row>
            <Col $w={418}>
              <Label $color="#800000" $mt={6}>Andamento...</Label>
              <Sunken $h={19} $bg="#efefef"> </Sunken>
            </Col>
            <RaisedBtn $w={140} $h={38} $center $gap={5}><EditIcon /><U>Gerar</U></RaisedBtn>
            <RaisedBtn $w={140} $h={38} $center $gap={6} $ml={2}><YellowDoor /><U>Sair</U></RaisedBtn>
          </Row>
        </Win5Inner>
      </Win>

      {/* Contabilização dos Registros */}
      <Win $x={846} $y={10} $w={742} $h={599} $bg="#5fc6ea" $edge="#20303c">
        <TitleBar $h={31} $pl={8} $pr={5} $bg="#5fc6ea" $pt={0}>
          <AppIcon />
          <Title $pl={82} $size={15}>Contabilização dos Registros</Title>
          <Win3Btns>
            <Win3Btn $w={29}><MinGlyph /></Win3Btn>
            <Win3Btn $w={26}><MaxGlyph /></Win3Btn>
            <Win3Btn $w={46} $bg="#c75050">X</Win3Btn>
          </Win3Btns>
        </TitleBar>
        <Win3Body>
          <TealHeader>
            <HeadLeft>
              <HeadRow>
                <HeadCell $w={89}><B>Planilha</B>9615471901</HeadCell>
                <HeadCell $w={208}><B>Form</B>dfmNFBaixaOrdemSemen</HeadCell>
                <HeadCell $w={200}><B>Regra</B>VENDA / REVENDA DE CLIENTE</HeadCell>
              </HeadRow>
              <HeadRow>
                <HeadCell $w={282}><B>Origem</B>Saida por Ordem de Carregamento - Sementes</HeadCell>
                <HeadCell $w={100}><B>Módulo</B>Sementes</HeadCell>
              </HeadRow>
            </HeadLeft>
            <Regime $w={170} $h={46} $mt={13} $noRight $line="#a85a5a">
              <Legend $plain $bg="#008080" $color="#fff" $left={3}>Regime de Contabilização</Legend>
              <RadioLine $l={4} $t={10} $col $gap={6}>
                <Radio color="#fff">Caixa</Radio>
                <Radio color="#fff" on>Competência</Radio>
              </RadioLine>
            </Regime>
          </TealHeader>
          <Section $h={207} $mt={8}>
            <Legend $color="#000080" $bold $size={12} $left={6}>Contabilização</Legend>
            <Row $mt={10}>
              <Col $w={704}>
                <DataArea $h={121} $w={704}>
                  <GridHead $cols={contCols} $bg="#417c7c" $h={16} $size={10} $ls={-0.2}>
                    {contHead.map((h, i) => (
                      <Cell key={h} $align={i === 4 ? "flex-end" : "flex-start"}>{h}</Cell>
                    ))}
                  </GridHead>
                  {contRows.map((r, ri) => (
                    <GridLine
                      key={ri}
                      $cols={contCols}
                      $bg={ri === 0 ? "#3399ff" : "transparent"}
                      $color={ri === 0 ? "#dbeeff" : "#000080"}
                      $sep="#808080"
                      $size={10}
                      $ls={-0.3}
                      $line="#808080"
                    >
                      {r.map((c, i) => (
                        <Cell key={i} $align={i === 4 ? "flex-end" : "flex-start"}>{c}</Cell>
                      ))}
                    </GridLine>
                  ))}
                </DataArea>
                <StatusBar $w={704}>1/4</StatusBar>
              </Col>
              <ScrollV $w={17} $h={138} $bg="#f8f8f8">
                <Chevron $dir="up" />
                <ThumbV $h={58}><Grip /></ThumbV>
                <Spacer />
                <Chevron $dir="down" />
              </ScrollV>
            </Row>
            <ScrollH $w={704} $h={16} $mt={2}>
              <Chevron $dir="left" />
              <ThumbH $w={16} />
              <Spacer />
              <Chevron $dir="right" />
            </ScrollH>
            <Totals>
              <TotalLabel>Totais :</TotalLabel>
              <TotalField $w={119} $ml={0}>
                <TotalTitle $color="#800000">Débito</TotalTitle>
                <TotalVal $h={17} $right>65.308,13</TotalVal>
              </TotalField>
              <TotalField $w={119} $ml={6}>
                <TotalTitle $color="#000080">Credito</TotalTitle>
                <TotalVal $h={17} $right>65.308,13</TotalVal>
              </TotalField>
              <TotalField $w={119} $ml={7}>
                <TotalTitle $color="#008000" $mr={-3}>Diferença</TotalTitle>
                <TotalVal $h={17} $right>0</TotalVal>
              </TotalField>
            </Totals>
          </Section>
          <Section $h={115} $mt={8}>
            <Legend $color="#000080" $bold $size={12} $left={6}>Plano Auxiliar</Legend>
            <Col $w={721} $mt={9}>
              <DataArea $h={85} $w={721}>
                <GridHead $cols="159px 354px 119px" $bg="#008080" $h={16} $w={632} $size={10}>
                  <Cell>Conta</Cell>
                  <Cell>Plano Auxiliar</Cell>
                  <Cell $align="flex-end">Valor</Cell>
                </GridHead>
                <GridLine $cols="159px 354px 119px" $bg="#3399ff" $color="#dbeeff" $h={18} $sep="#808080" $w={632} $size={10} $ls={-0.3}>
                  <Cell>1.12.18</Cell>
                  <Cell>SEMENTE DE ALGODAO TRATADA</Cell>
                  <Cell $align="flex-end">30.758,16</Cell>
                </GridLine>
              </DataArea>
              <StatusBar $w={721}>1/1</StatusBar>
            </Col>
          </Section>
          <Section $h={102} $mt={8}>
            <Legend $color="#000080" $bold $size={12} $left={6}>Plano de Custo</Legend>
            <Col $w={721} $mt={10}>
              <DataArea $h={71} $w={721}>
                <GridHead $cols="92px 209px 68px 156px 109px" $bg="#008080" $h={16} $w={634}>
                  <Cell>Conta</Cell>
                  <Cell>Centro de Custo</Cell>
                  <Cell>Conta</Cell>
                  <Cell>Plano de Custo</Cell>
                  <Cell $align="flex-end">Valor</Cell>
                </GridHead>
                <GridLine $cols="92px 209px 68px 156px 109px" $bg="#3399ff" $h={18} $sep="#808080" $w={634}>
                  <Cell /><Cell /><Cell /><Cell /><Cell />
                </GridLine>
              </DataArea>
              <StatusBar $w={721}>0/0</StatusBar>
            </Col>
          </Section>
          <FootBar>
            <RaisedBtn $w={117} $h={31} $center $gap={6}><WoodDoor /><span>Sair</span></RaisedBtn>
          </FootBar>
        </Win3Body>
      </Win>

      <Watermark>
        <WmA>Ativar o Windows</WmA>
        <WmB>Vá para Sistema no Painel de Controle para ativar o Windows.</WmB>
      </Watermark>

      <Annot width="1610" height="891" viewBox="0 0 1610 891">
        <g fill="none" stroke="#ff0000" strokeWidth="3">
          <rect x="170" y="110" width="47" height="44" />
          <rect x="848" y="113" width="414" height="114" />
          <rect x="1439" y="738" width="151" height="84" />
        </g>
        <g stroke="#ff0000" strokeWidth="3" fill="none">
          <path d="M169 154 L86 230" />
          <path d="M847 227 L730 631" />
          <path d="M1464 737 L1242 238" />
          <path d="M666 646 L834 649" />
        </g>
        <path d="M80 236 L84 222 L94 230 Z" fill="#ff0000" />
        <path d="M1240 232 L1238 246 L1250 242 Z" fill="#ff0000" />
      </Annot>
    </Desktop>
  );
}
